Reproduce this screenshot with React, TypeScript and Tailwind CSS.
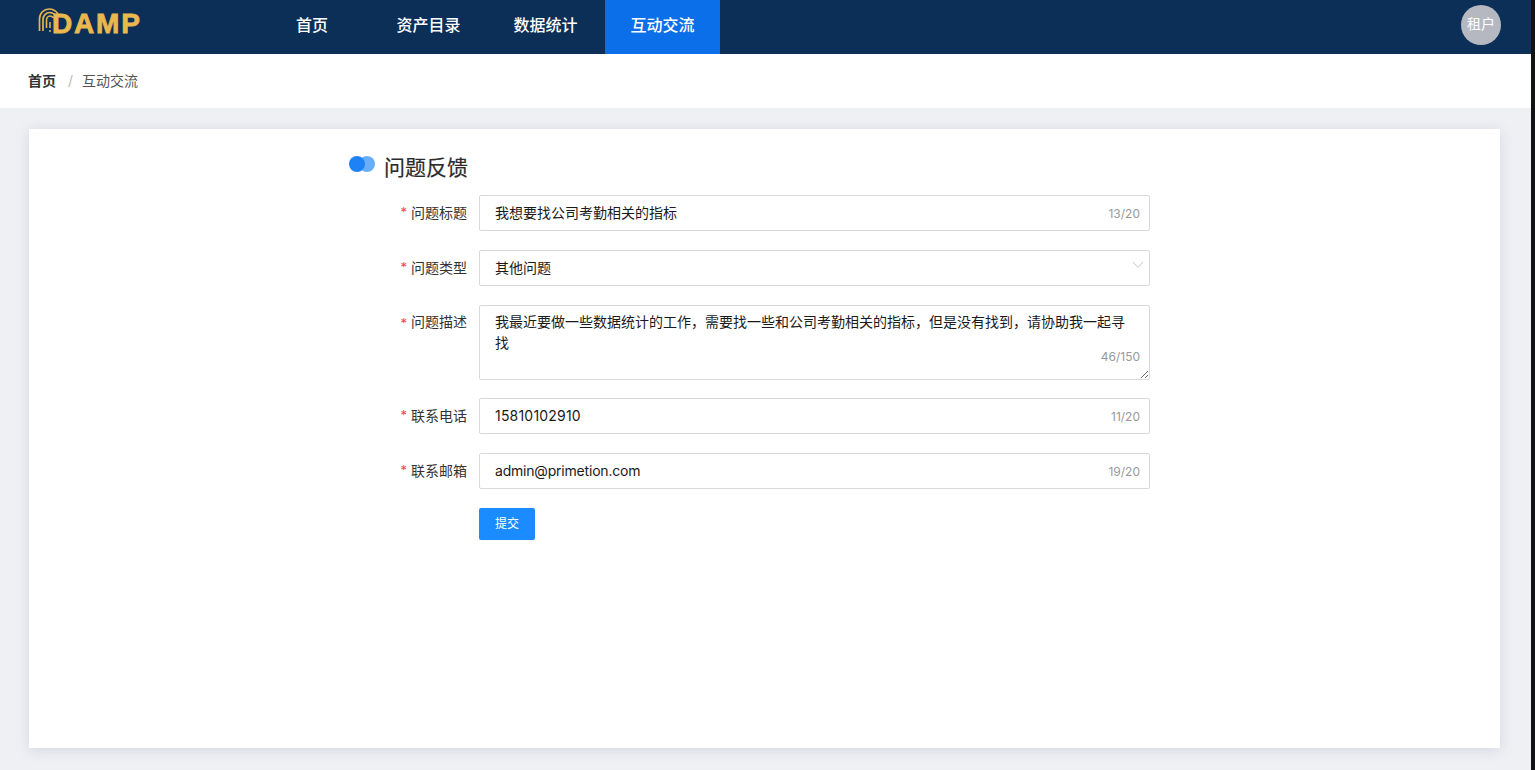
const font = 'font-["Inter","Noto_Sans_CJK_SC",sans-serif]';

function Logo() {
  return (
    <div className="flex items-start ml-[38px] h-[54px] pt-[8px]">
      <svg width="22" height="26" viewBox="0 0 22 26" fill="none" stroke="#e6b552" className="mr-[-8px] shrink-0">
        <path d="M1.5 23 V11 C1.5 5 6 1 11 1 C15 1 18 3 20 6" strokeWidth="1.7" />
        <path d="M5 23 V11.5 C5 8 8 4.5 11.5 4.5 C14 4.5 16.5 6 18 8" strokeWidth="1.7" />
        <path d="M8.5 20 V12 C8.5 10 10 8 12 8 C13.5 8 15 9 16 10" strokeWidth="1.6" />
        <path d="M12 14 V20 M12 22 V24" strokeWidth="1.5" />
      </svg>
      <span className='text-[28px] leading-[28px] font-bold tracking-[1.8px] text-[#e9b84f] [-webkit-text-stroke:0.8px_#e9b84f] font-["Liberation_Sans",sans-serif] mt-[2px]'>DAMP</span>
    </div>
  );
}

function NavItem({ label, active, className = "" }: { label: string; active?: boolean; className?: string }) {
  return (
    <div
      className={`h-full flex items-center pb-[5px] text-[16px] font-medium text-white ${active ? "bg-[#0a6fe8]" : ""} ${className}`}
    >
      {label}
    </div>
  );
}

function Row({ label, children, top = false }: { label: string; children: React.ReactNode; top?: boolean }) {
  return (
    <div className="flex">
      <div className={`w-[118px] flex justify-end text-[14px] text-[#333] ${top ? "pt-[6px] leading-[22px]" : "items-center h-[36px] pb-[2px]"}`}>
        <span className="text-[#f5424d] text-[13px] mr-[4px] translate-y-[1px]">*</span>
        <span>{label}</span>
      </div>
      <div className="ml-[12px] w-[671px] relative">{children}</div>
    </div>
  );
}

function TextField({ value, count, className = "" }: { value: string; count: string; className?: string }) {
  return (
    <>
      <input
        readOnly
        value={value}
        className={`block w-full h-[36px] rounded-[2px] border border-[#d9d9d9] bg-white pl-[15px] pr-[50px] pb-[2px] text-[14px] text-[#1a1a1a] outline-none ${className}`}
      />
      <span className="absolute right-[10px] top-[10px] text-[12px] leading-[17px] text-[#999]">{count}</span>
    </>
  );
}

export default function App() {
  return (
    <div className={`h-[770px] w-[1535px] flex overflow-hidden bg-[#111214] ${font}`}>
      <div className="w-[1531px] h-full flex flex-col bg-[#eef0f4]">
        <header className="h-[54px] shrink-0 bg-[#0c2f57] flex items-center">
          <div className="w-[270px] shrink-0">
            <Logo />
          </div>
          <nav className="h-full flex gap-[2px]">
            <NavItem label="首页" className="w-[99px] pl-[26px]" />
            <NavItem label="资产目录" className="w-[115px] justify-center" />
            <NavItem label="数据统计" className="w-[115px] justify-center" />
            <NavItem label="互动交流" active className="w-[115px] justify-center" />
          </nav>
          <div className="ml-auto mr-[30px] mb-[5px] pb-[2px] w-[40px] h-[40px] rounded-full bg-[#b5b8c1] flex items-center justify-center text-[14px] text-white">
            租户
          </div>
        </header>
        <div className="h-[54px] shrink-0 bg-white flex items-center pl-[28px] pb-[2px] text-[14px]">
          <span className="font-semibold text-[#333]">首页</span>
          <span className="ml-[12px] mr-[9px] text-[#bbb]">/</span>
          <span className="text-[#555]">互动交流</span>
        </div>
        <main className="flex-1 min-h-0 pt-[21px] pb-[22px] pl-[29px] pr-[31px]">
          <div className="h-full bg-white shadow-[0_2px_12px_rgba(150,155,175,0.3)] pt-[24px] pl-[320px]">
            <div className="flex items-center h-[30px]">
              <div className="relative w-[26px] h-[16px] mt-[-8px]">
                <span className="absolute right-0 top-0 w-[16px] h-[16px] rounded-full bg-[#69aef9]" />
                <span className="absolute left-0 top-0 w-[16px] h-[16px] rounded-full bg-[#1c82f5]" />
              </div>
              <h1 className="ml-[9px] text-[21px] leading-[30px] font-normal text-[#2b2b2b] [-webkit-text-stroke:0.2px_#2b2b2b]">问题反馈</h1>
            </div>
            <div className="mt-[12px] flex flex-col gap-[19px]">
              <Row label="问题标题">
                <TextField value="我想要找公司考勤相关的指标" count="13/20" />
              </Row>
              <Row label="问题类型">
                <div className="h-[36px] rounded-[2px] border border-[#d9d9d9] bg-white pl-[15px] pb-[2px] flex items-center text-[14px] text-[#1a1a1a]">
                  其他问题
                </div>
                <svg className="absolute right-[6px] top-[11px]" width="12" height="8" viewBox="0 0 12 8" fill="none" stroke="#c4c7cc" strokeWidth="1">
                  <path d="M1 1 L6 6.5 L11 1" />
                </svg>
              </Row>
              <Row label="问题描述" top>
                <textarea
                  readOnly
                  value="我最近要做一些数据统计的工作，需要找一些和公司考勤相关的指标，但是没有找到，请协助我一起寻找"
                  className="block w-full h-[75px] mb-[-1px] rounded-[2px] border border-[#d9d9d9] bg-white px-[15px] py-[5px] text-[14px] leading-[21px] text-[#1a1a1a] outline-none resize-y"
                />
                <span className="absolute right-[10px] top-[43px] text-[12px] leading-[17px] text-[#999]">46/150</span>
              </Row>
              <Row label="联系电话">
                <TextField value="15810102910" count="11/20" className="tracking-[0.2px]" />
              </Row>
              <Row label="联系邮箱">
                <TextField value="admin@primetion.com" count="19/20" className="tracking-[-0.2px]" />
              </Row>
              <div className="pl-[118px] ml-[12px]">
                <button className="w-[56px] h-[32px] bg-[#1a8cff] rounded-[2px] text-[12px] text-white">提交</button>
              </div>
            </div>
          </div>
        </main>
      </div>
    </div>
  );
}
